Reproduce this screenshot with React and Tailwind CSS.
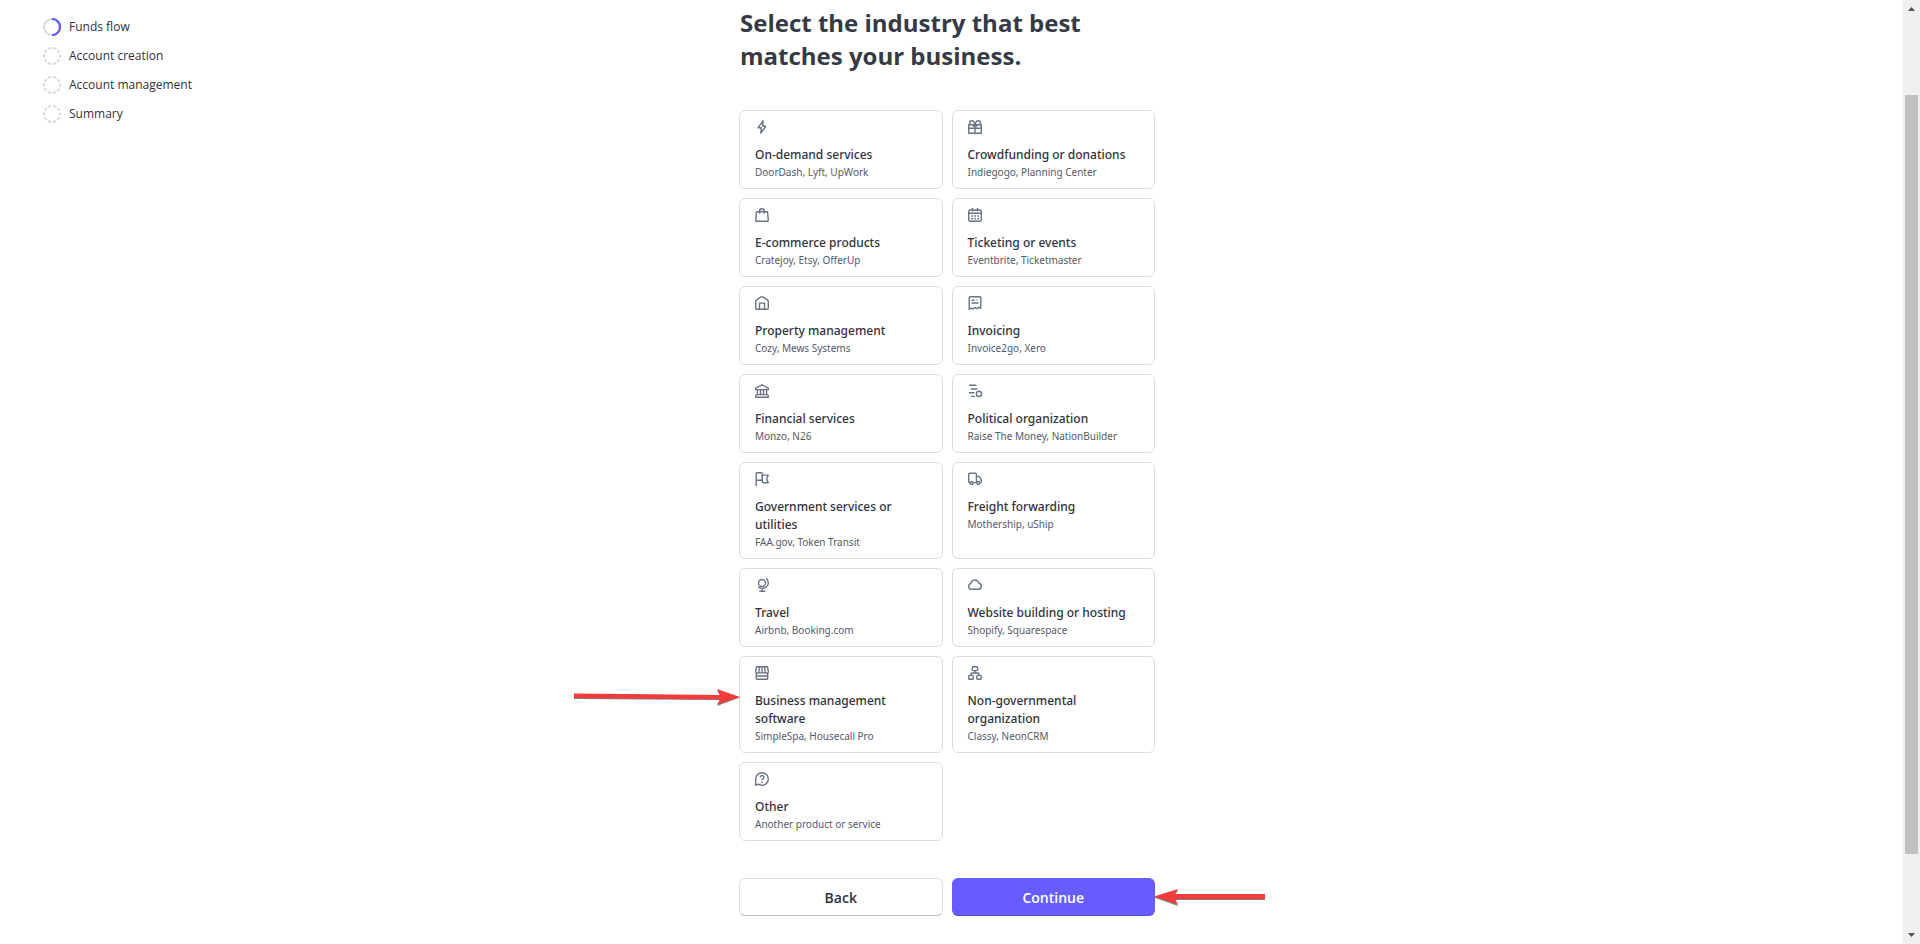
import { useState } from "react";
import clsx from "clsx";

const icons = {
  bolt: <path d="M8 .8 3.200 7.700h3.100L5.800 13.200 10.700 6.300H7.600z" />,
  gift: (
    <>
      <path d="M.7 4.700h12.600v3.500H.7zM.7 8v5.300h12.600V8M7 4.700v8.600" />
      <path d="M7 4.500C6.400 2 5 .7 3.400.7 1.400.7 1.300 3.200 2.600 4.400M7 4.500C7.600 2 9 .7 10.600.7c2 0 2.100 2.500.8 3.700M7 4.700 4.800 6.600M7 4.700l2.200 1.900" />
    </>
  ),
  bag: (
    <path d="M2 3.700h10a.6.6 0 0 1 .6.6l.7 8.400a.6.6 0 0 1-.6.6H1.300a.6.6 0 0 1-.6-.6l.7-8.400a.6.6 0 0 1 .6-.6zM4.600 5.800V3.100a2.400 2.400 0 0 1 4.800 0v2.700" />
  ),
  calendar: (
    <>
      <rect x=".7" y="2" width="12.600" height="11.300" rx="1.500" />
      <path d="M.7 5.300h12.600M4.500 0v3.500M9.500 0v3.500" />
      <path d="M3.200 8h1.700M6.200 8h1.700M9.200 8h1.700M3.200 10.700h1.700M6.200 10.700h1.700M9.200 10.700h1.700" />
    </>
  ),
  home: (
    <>
      <path d="M.7 5.200a1.400 1.400 0 0 1 .6-1.100L6.200.9a1.400 1.400 0 0 1 1.600 0l4.900 3.200a1.400 1.400 0 0 1 .6 1.100v6.700a1.400 1.400 0 0 1-1.400 1.400H2.100a1.400 1.400 0 0 1-1.400-1.400z" />
      <path d="M4.500 13.300V7.100h5v6.200" />
    </>
  ),
  invoice: (
    <>
      <path d="M1.200 13.300V1.900A1.200 1.200 0 0 1 2.400.7h9.200a1.200 1.200 0 0 1 1.200 1.200v10.400l-1.900-1-1.900 1.400L7 11.600l-2 1.400-1.700-.9z" />
      <path d="M3.500 4.300h3M3.500 7h7M8.600 4.300h.8" />
    </>
  ),
  bank: (
    <path d="M.7 4.100 7 .8l6.300 3.300v1.500H.7zM2.400 5.600v4.900M5.500 5.600v4.900M8.500 5.600v4.900M11.600 5.600v4.900M1.700 10.600h10.600l1 1.100v1.600H.7v-1.600z" />
  ),
  ballot: (
    <>
      <path d="M1 1.300h7.500M3 5h6.500M1 8.700h5.500M3 12.400h4" />
      <circle cx="11" cy="9.900" r="2.600" />
    </>
  ),
  flag: (
    <>
      <path d="M1.200 14V1.600A.9.9 0 0 1 2.100.7h4.300a.9.9 0 0 1 .9.9v6.600H1.200" />
      <path d="M7.300 3.100h5.900l-1.500 3.800 1.500 3.800H8.400a1.100 1.100 0 0 1-1.100-1.100z" />
    </>
  ),
  truck: (
    <>
      <path d="M2 10.600h-.4a.9.9 0 0 1-.9-.9V2.100a.9.9 0 0 1 .9-.9h5.900a.9.9 0 0 1 .9.9v8.500H5.200M8.400 4.400h2.300a1 1 0 0 1 .8.4l1.500 2.200a1 1 0 0 1 .3.700v2a.9.9 0 0 1-.9.900" />
      <circle cx="3.600" cy="11" r="1.500" />
      <circle cx="10.400" cy="11" r="1.500" />
    </>
  ),
  globe: (
    <>
      <circle cx="7" cy="5" r="3.500" />
      <path d="M11.300.3c2.700 2.900 2.400 6.400.5 8.200-2.500 2.300-6.200 2.200-8.700.4M7.400 10.200v3M4.300 13.300h6" />
    </>
  ),
  cloud: (
    <path d="M3.600 11.300a2.900 2.900 0 0 1-.8-5.700A4.100 4.100 0 0 1 10.400 4l.5 1.200a3.100 3.100 0 0 1-.3 6.100z" />
  ),
  store: (
    <>
      <path d="M1.500.7h11l.8 4.600a1.600 1.600 0 0 1-3.200.6 1.600 1.600 0 0 1-3.100 0 1.600 1.600 0 0 1-3.100 0 1.600 1.600 0 0 1-3.200-.6zM4.500.7l-.6 4.900M9.500.7l.6 4.900M7 .7v4.900" />
      <path d="M1.300 7.300v4.900a1.100 1.100 0 0 0 1.100 1.100h9.200a1.100 1.100 0 0 0 1.100-1.100V7.300M1.300 10h11.400" />
    </>
  ),
  network: (
    <>
      <rect x="4.300" y=".7" width="5.400" height="3.900" rx="1" />
      <rect x=".7" y="9.400" width="4.600" height="3.900" rx="1" />
      <rect x="8.700" y="9.400" width="4.600" height="3.900" rx="1" />
      <path d="M7 4.600v2.400M3 9.400V7.900a.9.9 0 0 1 .9-.9h6.200a.9.9 0 0 1 .9.9v1.500" />
    </>
  ),
  question: (
    <>
      <path d="M.7 13.300V7A6.300 6.300 0 1 1 7 13.300a6.300 6.300 0 0 1-3.600-1.100z" />
      <path d="M5.200 5.400a1.800 1.800 0 1 1 2.700 1.500c-.6.400-.9.700-.9 1.400M7 9.700v1.300" />
    </>
  ),
};

const industries = [
  { icon: "bolt", title: "On-demand services", examples: "DoorDash, Lyft, UpWork" },
  { icon: "gift", title: "Crowdfunding or donations", examples: "Indiegogo, Planning Center" },
  { icon: "bag", title: "E-commerce products", examples: "Cratejoy, Etsy, OfferUp" },
  { icon: "calendar", title: "Ticketing or events", examples: "Eventbrite, Ticketmaster" },
  { icon: "home", title: "Property management", examples: "Cozy, Mews Systems" },
  { icon: "invoice", title: "Invoicing", examples: "Invoice2go, Xero" },
  { icon: "bank", title: "Financial services", examples: "Monzo, N26" },
  { icon: "ballot", title: "Political organization", examples: "Raise The Money, NationBuilder" },
  { icon: "flag", title: "Government services or utilities", examples: "FAA.gov, Token Transit" },
  { icon: "truck", title: "Freight forwarding", examples: "Mothership, uShip" },
  { icon: "globe", title: "Travel", examples: "Airbnb, Booking.com" },
  { icon: "cloud", title: "Website building or hosting", examples: "Shopify, Squarespace" },
  { icon: "store", title: "Business management software", examples: "SimpleSpa, Housecall Pro", marked: true },
  { icon: "network", title: "Non-governmental organization", examples: "Classy, NeonCRM" },
  { icon: "question", title: "Other", examples: "Another product or service" },
];

const steps = ["Funds flow", "Account creation", "Account management", "Summary"];

const StepIcon = ({ active }) => (
  <svg viewBox="0 0 18 18" className="size-[18px] shrink-0" fill="none" strokeWidth="2">
    {active ? (
      <>
        <circle cx="9" cy="9" r="8" stroke="#d5dbe1" />
        <path d="M9 1a8 8 0 0 1 0 16" stroke="#635bff" strokeWidth="2.200" />
      </>
    ) : (
      <circle cx="9" cy="9" r="8" stroke="#d5dbe1" strokeDasharray="3.200 1.827" strokeDashoffset="1.600" />
    )}
  </svg>
);

const ArrowRight = ({ className }) => (
  <svg viewBox="0 0 166 18" className={clsx("pointer-events-none absolute h-[18px] w-[166px]", className)}>
    <path d="M0 6 146 7.500 143 2l23 7.500L143 18l3-6L0 11z" fill="#808080" />
    <path d="M0 5.500 146 7 143 1l23 8-23 7.500 3-5L0 10z" fill="#f23b3b" />
  </svg>
);

const ArrowLeft = ({ className }) => (
  <svg viewBox="0 0 111 18" className={clsx("pointer-events-none absolute h-[18px] w-[111px]", className)}>
    <path d="M111 7H21l3-5L0 9.500 24 18l-3-6h90z" fill="#808080" />
    <path d="M111 6H21l3-5L0 8.500l24 8L21 11h90z" fill="#f23b3b" />
  </svg>
);

const IndustryCard = ({ industry, selected, onSelect }) => (
  <button
    type="button"
    aria-pressed={selected}
    onClick={onSelect}
    className="relative flex cursor-pointer flex-col items-start rounded-md border border-[#d8dee4] bg-white px-[15px] pt-[9px] pb-2 text-left"
  >
    <svg
      viewBox="0 0 14 14"
      className="mb-3 size-3.5 shrink-0 overflow-visible"
      fill="none"
      stroke="#6a7383"
      strokeWidth="1.400"
      strokeLinejoin="round"
    >
      {icons[industry.icon]}
    </svg>
    <span className="text-xs leading-[18px] font-medium text-[#30313d]">{industry.title}</span>
    <span className="text-[10px] leading-4 text-[#545969]">{industry.examples}</span>
    {industry.marked && <ArrowRight className="top-[31px] right-full" />}
  </button>
);

const Scrollbar = () => (
  <div className="flex h-screen w-[17px] shrink-0 flex-col items-center bg-[#f0f0f0]" aria-hidden="true">
    <svg viewBox="0 0 17 17" className="size-[17px]" fill="#505050">
      <path d="M5 11 8.500 7 12 11z" />
    </svg>
    <div className="flex min-h-0 w-[13px] flex-1 flex-col">
      <div className="flex-[78]" />
      <div className="flex-[759] bg-[#c1c1c1]" />
      <div className="flex-[73]" />
    </div>
    <svg viewBox="0 0 17 17" className="size-[17px]" fill="#505050">
      <path d="M5 6 8.500 10 12 6z" />
    </svg>
  </div>
);

const App = () => {
  const [selected, setSelected] = useState(null);

  return (
    <div className="flex h-screen overflow-hidden bg-white font-['Noto_Sans','Open_Sans',sans-serif] text-[#30313d]">
      <div className="flex min-w-0 flex-1">
        {/* Progress steps */}
        <nav className="min-w-0 flex-1 font-['Open_Sans','Noto_Sans',sans-serif]">
          <ol className="flex flex-col gap-[11px] pt-[18px] pl-[43px]">
            {steps.map((step, i) => (
              <li key={step} className="flex items-center gap-2 text-xs leading-[18px]">
                <StepIcon active={i === 0} />
                {step}
              </li>
            ))}
          </ol>
        </nav>

        <main className="mr-[9px] w-[416px] shrink-0 pt-1.5">
          <h1 className="max-w-[380px] pl-px font-['Open_Sans','Noto_Sans',sans-serif] text-2xl leading-[33px] font-bold text-[#353a44]">
            Select the industry that best matches your business.
          </h1>

          <div className="mt-[38px] grid grid-cols-2 gap-[9px]">
            {industries.map((industry) => (
              <IndustryCard
                key={industry.title}
                industry={industry}
                selected={selected === industry.title}
                onSelect={() => setSelected(industry.title)}
              />
            ))}
          </div>

          <div className="mt-[37px] grid grid-cols-2 gap-[9px] font-['Open_Sans','Noto_Sans',sans-serif] text-sm font-semibold">
            <button
              type="button"
              className="h-[38px] cursor-pointer rounded-md border border-[#d8dee4] border-b-[#b9bfc9] bg-white pt-0.5"
            >
              Back
            </button>
            <button
              type="button"
              className="relative h-[38px] cursor-pointer rounded-md border border-[#675dff] border-b-[#554bd8] bg-[#675dff] pt-0.5 text-white"
            >
              Continue
              <ArrowLeft className="top-[9px] left-full" />
            </button>
          </div>
        </main>

        <div className="min-w-0 flex-1" />
      </div>
      <Scrollbar />
    </div>
  );
};

export default App;
